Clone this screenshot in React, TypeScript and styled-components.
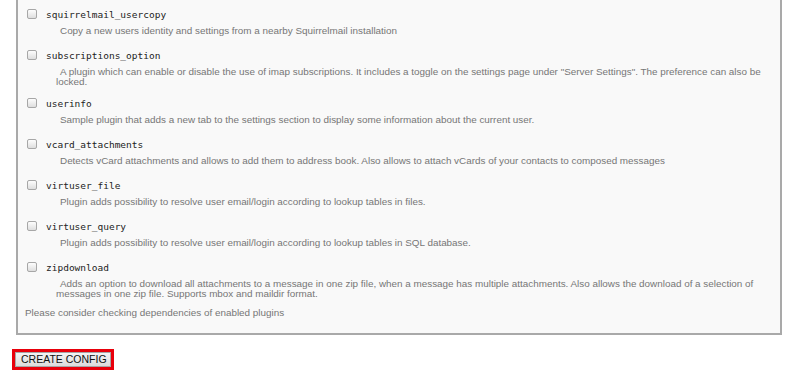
import React from 'react';
import styled, { createGlobalStyle } from 'styled-components';

interface Plugin {
  name: string;
  description: string;
}

const plugins: Plugin[] = [
  {
    name: 'squirrelmail_usercopy',
    description: 'Copy a new users identity and settings from a nearby Squirrelmail installation',
  },
  {
    name: 'subscriptions_option',
    description:
      'A plugin which can enable or disable the use of imap subscriptions. It includes a toggle on the settings page under "Server Settings". The preference can also be locked.',
  },
  {
    name: 'userinfo',
    description: 'Sample plugin that adds a new tab to the settings section to display some information about the current user.',
  },
  {
    name: 'vcard_attachments',
    description:
      'Detects vCard attachments and allows to add them to address book. Also allows to attach vCards of your contacts to composed messages',
  },
  {
    name: 'virtuser_file',
    description: 'Plugin adds possibility to resolve user email/login according to lookup tables in files.',
  },
  {
    name: 'virtuser_query',
    description: 'Plugin adds possibility to resolve user email/login according to lookup tables in SQL database.',
  },
  {
    name: 'zipdownload',
    description:
      'Adds an option to download all attachments to a message in one zip file, when a message has multiple attachments. Also allows the download of a selection of messages in one zip file. Supports mbox and maildir format.',
  },
];

const GlobalStyle = createGlobalStyle`
  body {
    margin: 0;
    background: #ffffff;
    font-family: "Liberation Sans", Arial, sans-serif;
  }
`;

const App = () => {
  const [checked, setChecked] = React.useState<Record<string, boolean>>({});

  const toggle = (name: string) => {
    setChecked((prev) => ({ ...prev, [name]: !prev[name] }));
  };

  return (
    <Page>
      <GlobalStyle />
      <PluginBox>
        <PluginList>
          {plugins.map((plugin) => (
            <PluginRow key={plugin.name}>
              <PluginHeader>
                <CheckBox type="checkbox" checked={!!checked[plugin.name]} onChange={() => toggle(plugin.name)} />
                <PluginName>{plugin.name}</PluginName>
              </PluginHeader>
              <PluginDescription>{plugin.description}</PluginDescription>
            </PluginRow>
          ))}
        </PluginList>
        <Note>Please consider checking dependencies of enabled plugins</Note>
      </PluginBox>
      <Highlight>
        <SubmitButton type="button">CREATE CONFIG</SubmitButton>
      </Highlight>
    </Page>
  );
};

const Page = styled.div`
  padding: 0 12px 20px 12px;
`;

const PluginBox = styled.div`
  margin-left: 4px;
  background: #f9f9f9;
  border: 2px solid #a9a9a9;
  border-top: none;
  padding: 7px 6px 15px 7px;
`;

const PluginList = styled.div`
  display: flex;
  flex-direction: column;
`;

const PluginRow = styled.div`
  display: flex;
  flex-direction: column;
  min-height: 41px;
  padding-bottom: 9px;
  box-sizing: border-box;
`;

const PluginHeader = styled.label`
  display: flex;
  align-items: center;
  height: 14px;
  padding-left: 2px;
  gap: 9px;
`;

const CheckBox = styled.input`
  appearance: none;
  margin: 0;
  width: 10px;
  height: 10px;
  border: 1px solid #a7a7a7;
  border-radius: 2px;
  background: linear-gradient(#fdfdfd, #dedede);
  box-sizing: border-box;
  &:checked {
    background: linear-gradient(#6fa0e8, #3b78d8);
    border-color: #3b6fc0;
  }
`;

const PluginName = styled.span`
  font-family: "DejaVu Sans Mono", "Liberation Mono", monospace;
  font-size: 9.5px;
  color: #222;
`;

const PluginDescription = styled.div`
  margin-top: 5px;
  padding-left: 31px;
  text-indent: 4px;
  font-size: 9.9px;
  line-height: 10px;
  color: #767676;
`;

const Note = styled.div`
  font-size: 9.9px;
  line-height: 10px;
  color: #767676;
`;

const Highlight = styled.div`
  display: inline-flex;
  margin-top: 14px;
  border: 3px solid #e8000b;
`;

const SubmitButton = styled.button`
  margin: 0;
  width: 96px;
  height: 15px;
  padding: 0 0 0 5px;
  text-align: left;
  border: 1px solid #a6a6a6;
  border-radius: 0;
  background: linear-gradient(#f4f4f4, #dcdcdc);
  font-family: "Liberation Sans", Arial, sans-serif;
  font-size: 10.5px;
  line-height: 13px;
  color: #111;
  box-sizing: border-box;
`;

export default App;
